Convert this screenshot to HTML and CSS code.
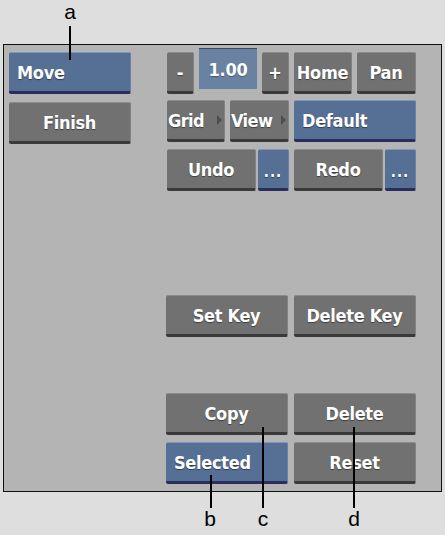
FILE: index.html
```html
<!DOCTYPE html>
<html lang="en">
<head>
  <meta charset="UTF-8">
  <title>Move Tool</title>
  <link rel="stylesheet" href="styles.css">
</head>
<body>

  <!-- Tool panel -->
  <div class="panel">
    <div class="col-left">
      <button class="btn blue text-left">Move</button>
      <button class="btn">Finish</button>
    </div>

    <div class="col-right">
      <div class="row row-zoom">
        <button class="btn w-small">-</button>
        <div class="field">1.00</div>
        <button class="btn w-small">+</button>
        <button class="btn w-mid">Home</button>
        <button class="btn w-mid">Pan</button>
      </div>

      <div class="row row-view">
        <button class="btn w-mid menu"><span>Grid</span><span class="arrow"></span></button>
        <button class="btn w-mid menu"><span>View</span><span class="arrow"></span></button>
        <button class="btn blue w-half text-left">Default</button>
      </div>

      <div class="row row-undo">
        <div class="pair">
          <button class="btn grow">Undo</button>
          <button class="btn blue dots">...</button>
        </div>
        <div class="pair">
          <button class="btn grow">Redo</button>
          <button class="btn blue dots">...</button>
        </div>
      </div>

      <div class="row row-keys">
        <button class="btn w-half">Set Key</button>
        <button class="btn w-half">Delete Key</button>
      </div>

      <div class="row row-copy">
        <button class="btn w-half">Copy</button>
        <button class="btn w-half">Delete</button>
      </div>

      <div class="row row-select">
        <button class="btn blue w-half text-left">Selected</button>
        <button class="btn w-half">Reset</button>
      </div>
    </div>
  </div>

  <!-- Callouts -->
  <div class="callout" style="left: 69px; top: 26px; height: 34px;"></div>
  <div class="callout" style="left: 210px; top: 475px; height: 33px;"></div>
  <div class="callout" style="left: 262px; top: 427px; height: 81px;"></div>
  <div class="callout" style="left: 353px; top: 427px; height: 81px;"></div>

  <span class="label" style="left: 60px; top: 0px;">a</span>
  <span class="label" style="left: 200px; top: 507px;">b</span>
  <span class="label" style="left: 253px; top: 507px;">c</span>
  <span class="label" style="left: 344px; top: 507px;">d</span>

</body>
</html>
```

FILE: styles.css
```css
body {
  margin: 0;
  background-color: #dedede;
  font-family: 'Liberation Sans', Arial, sans-serif;
  position: relative;
  width: 445px;
  height: 535px;
  overflow: hidden;
}

.panel {
  box-sizing: border-box;
  margin: 44px 0 0 3px;
  width: 439px;
  height: 448px;
  border: 1px solid #111;
  background-color: #b4b4b4;
  display: flex;
  gap: 36px;
  padding: 7px 0 0 5px;
}

.col-left {
  width: 122px;
  display: flex;
  flex-direction: column;
  gap: 8px;
}

.col-right {
  width: 250px;
  display: flex;
  flex-direction: column;
  margin-top: -2px;
}

.row {
  display: flex;
  gap: 5px;
}

.row-view { margin-top: 6px; }
.row-undo { margin-top: 7px; }
.row-keys { margin-top: 104px; }
.row-copy { margin-top: 56px; }
.row-select { margin-top: 7px; }

.row-keys, .row-copy, .row-select {
  gap: 6px;
  margin-left: -1px;
}

.btn {
  box-sizing: border-box;
  height: 42px;
  padding: 0;
  margin: 0;
  background-color: #717171;
  border: none;
  border-top: 1px solid #8c8c8c;
  border-right: 1px solid #828282;
  border-bottom: 3px solid #3a3a3a;
  border-radius: 2px;
  color: #fff;
  font-family: 'DejaVu Sans Condensed', 'DejaVu Sans', sans-serif;
  font-weight: bold;
  font-size: 18px;
  letter-spacing: -0.3px;
  text-shadow: 0 1px 1px rgba(0,0,0,0.45);
  text-align: center;
  white-space: nowrap;
  cursor: pointer;
}

.btn.blue {
  background-color: #566f95;
  border-top: 1px solid #7f95b9;
  border-right: 1px solid #6a80a6;
  border-bottom: 3px solid #2b2d5c;
}

.text-left {
  text-align: left;
  padding-left: 8px;
}

.w-small { width: 27px; }
.w-mid { width: 58px; }
.w-half { width: 122px; }

.field {
  box-sizing: border-box;
  width: 58px;
  height: 41px;
  margin-top: -2px;
  background-color: #6a82a2;
  border-top: 1px solid #3d4a63;
  color: #fff;
  font-family: 'DejaVu Sans Condensed', 'DejaVu Sans', sans-serif;
  font-weight: bold;
  font-size: 18px;
  letter-spacing: -0.3px;
  display: flex;
  align-items: center;
  justify-content: center;
  text-shadow: 0 1px 1px rgba(0,0,0,0.35);
}

.row-zoom .btn { margin-top: 2px; }
.row-zoom .btn:last-child { width: 59px; }

.menu {
  display: flex;
  align-items: center;
  justify-content: space-between;
  padding: 0 2px 0 1px;
  letter-spacing: -0.6px;
}

.row-view .menu:nth-child(2) { width: 59px; }

.arrow {
  flex: none;
  width: 0;
  height: 0;
  border-top: 5px solid transparent;
  border-bottom: 5px solid transparent;
  border-left: 5px solid #4e4e4e;
}

.pair {
  width: 122px;
  display: flex;
  gap: 2px;
}

.grow { flex: 1; }

.dots {
  width: 31px;
  font-size: 15px;
  letter-spacing: 1px;
  padding-top: 6px;
}

.callout {
  position: absolute;
  width: 2px;
  background-color: #000;
}

.label {
  position: absolute;
  width: 20px;
  text-align: center;
  font-size: 21px;
  line-height: 24px;
  color: #000;
}
```
